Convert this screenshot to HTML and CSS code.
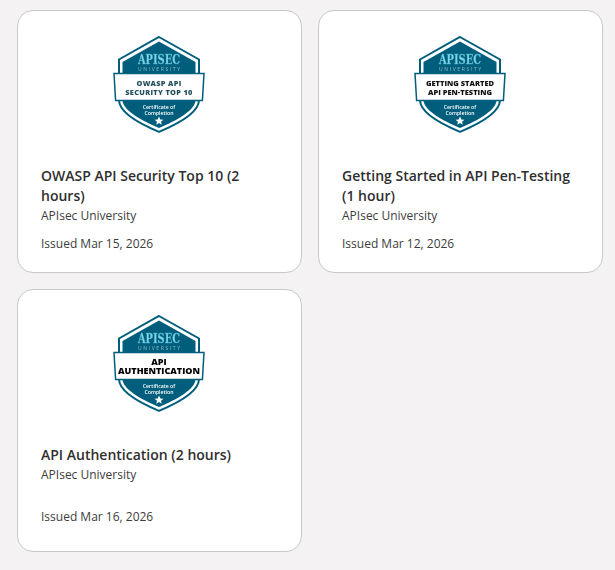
FILE: index.html
```html
<!DOCTYPE html>
<html lang="en">
<head>
<meta charset="utf-8">
<title>Certifications</title>
<link rel="stylesheet" href="styles.css">
</head>
<body>
<main class="grid">
  <article class="card">
    <div class="badge">
      <svg viewBox="0 0 100 100" role="img" aria-label="OWASP API Security Top 10 badge">
        <path class="s-outer" d="M50 3 90 25.500V66C90 78 70 89.500 50 97.800 30 89.500 10 78 10 66V25.500Z"/>
        <path class="s-fill" d="M50 7.500 86.500 28V66C86.500 76 68 86.500 50 94 32 86.500 13.500 76 13.500 66V28Z"/>
        <path class="s-band" d="M5 39.500H95L93.400 66.500H6.600Z"/>
        <path class="s-star" d="M50 82.500 51.300 85.500 54.500 85.700 52 87.700 52.800 90.800 50 89.100 47.200 90.800 48 87.700 45.500 85.700 48.700 85.500Z"/>
        <text class="s-brand" x="50" y="30" text-anchor="middle" textLength="42" lengthAdjust="spacingAndGlyphs">APISEC</text>
        <text class="s-uni" x="50" y="37" text-anchor="middle" textLength="42">UNIVERSITY</text>
        <text class="s-cert" x="50" y="74.500" text-anchor="middle">Certificate of</text>
        <text class="s-cert" x="50" y="80.500" text-anchor="middle">Completion</text>
        <text class="b-title b-wide" x="50" y="52" text-anchor="middle">OWASP API</text>
        <text class="b-title b-wide" x="50" y="61" text-anchor="middle">SECURITY TOP 10</text>
      </svg>
    </div>
    <div class="info">
      <h3 class="title">OWASP API Security Top 10 (2 hours)</h3>
      <p class="org">APIsec University</p>
    </div>
    <p class="issued">Issued Mar 15, 2026</p>
  </article>
  <article class="card">
    <div class="badge">
      <svg viewBox="0 0 100 100" role="img" aria-label="Getting Started API Pen-Testing badge">
        <path class="s-outer" d="M50 3 90 25.500V66C90 78 70 89.500 50 97.800 30 89.500 10 78 10 66V25.500Z"/>
        <path class="s-fill" d="M50 7.500 86.500 28V66C86.500 76 68 86.500 50 94 32 86.500 13.500 76 13.500 66V28Z"/>
        <path class="s-band" d="M5 39.500H95L93.400 66.500H6.600Z"/>
        <path class="s-star" d="M50 82.500 51.300 85.500 54.500 85.700 52 87.700 52.800 90.800 50 89.100 47.200 90.800 48 87.700 45.500 85.700 48.700 85.500Z"/>
        <text class="s-brand" x="50" y="30" text-anchor="middle" textLength="42" lengthAdjust="spacingAndGlyphs">APISEC</text>
        <text class="s-uni" x="50" y="37" text-anchor="middle" textLength="42">UNIVERSITY</text>
        <text class="s-cert" x="50" y="74.500" text-anchor="middle">Certificate of</text>
        <text class="s-cert" x="50" y="80.500" text-anchor="middle">Completion</text>
        <text class="b-title b-dark" x="50" y="52" text-anchor="middle">GETTING STARTED</text>
        <text class="b-title b-dark" x="50" y="61" text-anchor="middle">API PEN-TESTING</text>
      </svg>
    </div>
    <div class="info">
      <h3 class="title">Getting Started in API Pen-Testing (1 hour)</h3>
      <p class="org">APIsec University</p>
    </div>
    <p class="issued">Issued Mar 12, 2026</p>
  </article>
  <article class="card">
    <div class="badge">
      <svg viewBox="0 0 100 100" role="img" aria-label="API Authentication badge">
        <path class="s-outer" d="M50 3 90 25.500V66C90 78 70 89.500 50 97.800 30 89.500 10 78 10 66V25.500Z"/>
        <path class="s-fill" d="M50 7.500 86.500 28V66C86.500 76 68 86.500 50 94 32 86.500 13.500 76 13.500 66V28Z"/>
        <path class="s-band" d="M5 39.500H95L93.400 66.500H6.600Z"/>
        <path class="s-star" d="M50 82.500 51.300 85.500 54.500 85.700 52 87.700 52.800 90.800 50 89.100 47.200 90.800 48 87.700 45.500 85.700 48.700 85.500Z"/>
        <text class="s-brand" x="50" y="30" text-anchor="middle" textLength="42" lengthAdjust="spacingAndGlyphs">APISEC</text>
        <text class="s-uni" x="50" y="37" text-anchor="middle" textLength="42">UNIVERSITY</text>
        <text class="s-cert" x="50" y="74.500" text-anchor="middle">Certificate of</text>
        <text class="s-cert" x="50" y="80.500" text-anchor="middle">Completion</text>
        <text class="b-title b-big" x="50" y="51.500" text-anchor="middle">API</text>
        <text class="b-title b-big" x="50" y="61" text-anchor="middle">AUTHENTICATION</text>
      </svg>
    </div>
    <div class="info">
      <h3 class="title">API Authentication (2 hours)</h3>
      <p class="org">APIsec University</p>
    </div>
    <p class="issued">Issued Mar 16, 2026</p>
  </article>
</main>
</body>
</html>
```
FILE: styles.css
```css
* {
  box-sizing: border-box;
}

html,
body {
  margin: 0;
  background: #f4f2f3;
}

body {
  font-family: "Open Sans", "Liberation Sans", sans-serif;
  color: #333;
}

.grid {
  display: grid;
  grid-template-columns: 285px 285px;
  gap: 16px;
  padding: 10px 12px 18px 17px;
}

.card {
  background: #fff;
  border: 1px solid #c9c7c8;
  border-radius: 16px;
  padding: 23px 24px 19px 23px;
  min-height: 263px;
}

.badge {
  display: flex;
  justify-content: center;
  margin-bottom: 32px;
}

.badge svg {
  display: block;
  width: 100px;
  height: 100px;
  filter: blur(0.3px);
}

.info {
  min-height: 53px;
  margin-bottom: 10px;
}

.title {
  margin: 0;
  font-size: 14px;
  line-height: 20px;
  font-weight: 600;
  color: #2f2f2f;
}

.org,
.issued {
  margin: 0;
  font-size: 12px;
  line-height: 18px;
  color: #3d3d3d;
}

.org {
  margin-top: 1px;
}

.s-outer {
  fill: #fff;
  stroke: #005e7d;
  stroke-width: 2;
}

.s-fill {
  fill: #005e7d;
}

.s-band {
  fill: #fff;
  stroke: #005e7d;
  stroke-width: 1.500;
}

.s-star {
  fill: #fff;
}

.s-brand {
  font-family: "DejaVu Serif", serif;
  font-weight: 700;
  font-size: 12.500px;
  fill: #7fd6e8;
  stroke: #3fa9c4;
  stroke-width: 0.300;
}

.s-uni {
  font-family: "Open Sans", sans-serif;
  font-size: 5px;
  fill: #8fb9c8;
}

.s-cert {
  font-family: "Open Sans", sans-serif;
  font-size: 5.200px;
  font-weight: 600;
  fill: #fff;
}

.b-title {
  font-family: "Open Sans", sans-serif;
  font-weight: 800;
}

.b-wide {
  font-size: 7.400px;
  fill: #25505f;
  letter-spacing: 0.300px;
}

.b-dark {
  font-size: 7.500px;
  fill: #111;
}

.b-big {
  font-size: 9px;
  fill: #000;
}
```
